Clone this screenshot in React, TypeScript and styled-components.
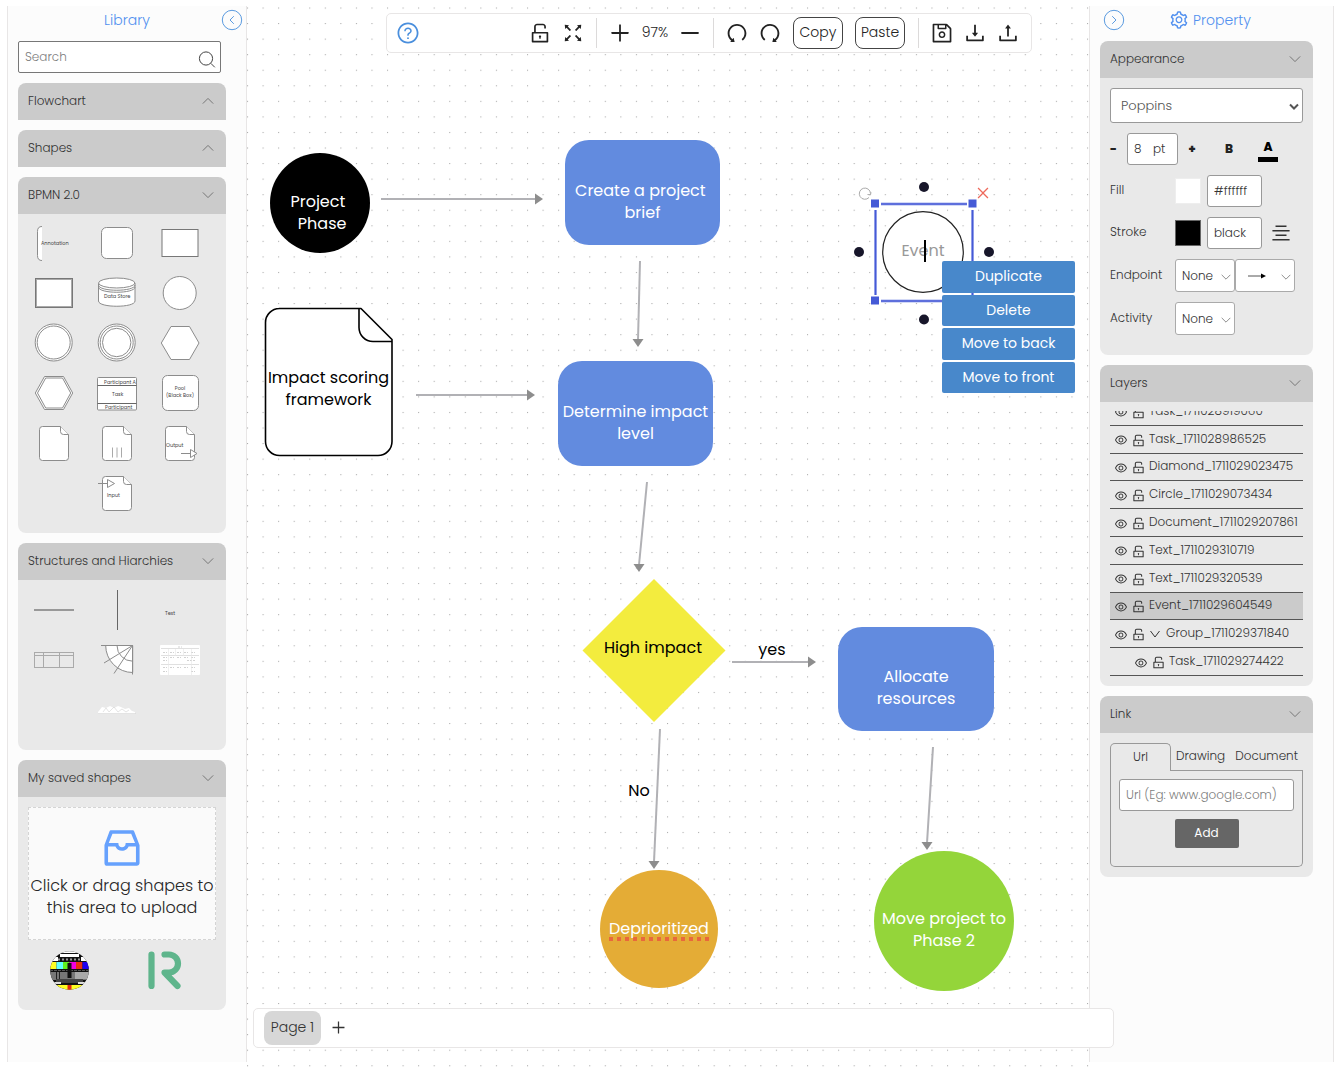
import React, { useState } from 'react';
import styled, { createGlobalStyle } from 'styled-components';
import {
  AiOutlineAlignCenter,
  AiOutlineClose,
  AiOutlineDownload,
  AiOutlineEye,
  AiOutlineFullscreen,
  AiOutlineInbox,
  AiOutlineMinus,
  AiOutlinePlus,
  AiOutlineQuestionCircle,
  AiOutlineRedo,
  AiOutlineSave,
  AiOutlineSetting,
  AiOutlineUndo,
  AiOutlineUnlock,
  AiOutlineUpload,
} from 'react-icons/ai';

const c = {
  ink: '#333333',
  link: '#5190ef',
  ring: '#5b9be0',
  panel: '#fcfcfc',
  line: '#e8e6e6',
  head: '#cbcbcb',
  body: '#e9e9e9',
  field: '#999999',
  menu: '#4888cb',
  task: '#628bdf',
};

const GlobalStyle = createGlobalStyle`
  *, *::before, *::after { box-sizing: border-box; }
  body {
    margin: 0;
    background: #fff;
    color: ${c.ink};
    font: 300 12px/20px Poppins, Inter, "Noto Sans", sans-serif;
  }
  button, input, select { font: inherit; color: inherit; }
  button { padding: 0; border: 0; background: none; cursor: pointer; }
  svg { display: block; flex: none; }
`;

const Shell = styled.div`
  display: grid;
  grid-template-columns: 240px minmax(0, 1fr) 245px;
  min-height: 100vh;
  padding: 0 1px 0 7px;
  overflow: hidden;
`;

/* ---------- side panels ---------- */

const Panel = styled.aside`
  margin: 6px 0 5px;
  padding: 0 20px 0 10px;
  border: solid ${c.line};
  border-width: 0 1px;
  background: ${c.panel};
`;

const PanelHead = styled.header<{ $side: 'left' | 'right' }>`
  display: grid;
  grid-template-columns: 22px 1fr 22px;
  align-items: center;
  height: 35px;
  padding-bottom: 7px;
  margin: ${p => (p.$side === 'left' ? '0 -17px 0 -7px' : '0 -4px 0 3px')};
`;

const PanelTitle = styled.h2`
  display: flex;
  grid-column: 2;
  align-items: center;
  justify-content: center;
  gap: 4px;
  margin: 0;
  font-size: 14px;
  font-weight: 300;
  color: ${c.link};
`;

const CollapseButton = styled.button<{ $col: number }>`
  grid-column: ${p => p.$col};
  grid-row: 1;
  color: ${c.ring};
`;

const SearchBox = styled.label`
  display: flex;
  align-items: center;
  height: 32px;
  margin: 0 5px 10px 0;
  padding: 0 4px 0 6px;
  border: 1px solid #777;
  border-radius: 2px;
  background: #fff;
  svg { margin-top: 3px; }
`;

const SearchInput = styled.input`
  flex: 1;
  min-width: 0;
  padding: 0;
  border: 0;
  outline: 0;
  background: none;
  &::placeholder { color: #808080; opacity: 1; }
`;

const Section = styled.section`
  margin-bottom: 10px;
`;

const SectionHead = styled.button`
  display: flex;
  align-items: center;
  justify-content: space-between;
  width: 100%;
  height: 37px;
  padding: 0 12px 2px 10px;
  border-radius: 8px 8px 0 0;
  background: ${c.head};
`;

const SectionBody = styled.div<{ $pad: string }>`
  padding: ${p => p.$pad};
  border-radius: 0 0 8px 8px;
  background: ${c.body};
`;

const ShapeGrid = styled.div`
  display: grid;
  grid-template-columns: repeat(3, 63px);
  grid-auto-rows: 50px;
`;

const ShapeButton = styled.button<{ $alone?: boolean }>`
  grid-column: ${p => (p.$alone ? 2 : 'auto')};
`;

const ShapeArt = styled.svg`
  fill: #fff;
  stroke: #8c8c8c;
  stroke-width: 1;
  text {
    fill: #444;
    stroke: none;
    font-size: 5px;
    font-weight: 400;
  }
`;

const DropZone = styled.button`
  display: flex;
  flex-direction: column;
  align-items: center;
  width: 100%;
  height: 133px;
  padding-top: 16px;
  border: 1px dashed #d4d4d4;
  background: #fafafa;
  font-size: 16px;
  line-height: 22px;
  color: #262626;
  white-space: nowrap;
  svg { margin-bottom: 3px; color: #66a1fd; }
`;

const SavedRow = styled.div`
  display: grid;
  grid-template-columns: repeat(2, 95px);
  justify-items: center;
  margin: 11px 0 0 -6px;
`;

/* ---------- property form ---------- */

const Form = styled.div`
  display: grid;
  gap: 10px;
`;

const Row = styled.div<{ $tall?: boolean }>`
  display: flex;
  align-items: center;
  height: ${p => (p.$tall ? 33 : 32)}px;
`;

const Label = styled.label`
  width: 65px;
  padding-bottom: 2px;
`;

const SelectWrap = styled.div<{ $width: string }>`
  display: grid;
  grid-template-columns: 1fr auto;
  align-items: center;
  width: ${p => p.$width};
  svg { pointer-events: none; grid-row: 1; grid-column: 2; margin: 2px 4px 0 0; }
`;

const Select = styled.select<{ $height: number; $pad: number }>`
  grid-area: 1 / 1 / 2 / 3;
  width: 100%;
  height: ${p => p.$height}px;
  padding: 0 0 0 ${p => p.$pad}px;
  border: 1px solid #aaa;
  border-radius: 3px;
  background: #fff;
  appearance: none;
`;

const FontSelect = styled(Select)`
  border-color: ${c.field};
  font-size: 13px;
  color: #555;
`;

const ArrowValue = styled.svg`
  && { grid-column: 1; justify-self: end; margin: 0 14px 0 0; }
`;

const Field = styled.input<{ $width: string }>`
  width: ${p => p.$width};
  height: 32px;
  padding: 0 6px;
  border: 1px solid ${c.field};
  border-radius: 3px;
  background: #fff;
  &::placeholder { color: #808080; opacity: 1; }
`;

const SizeBox = styled.label`
  display: flex;
  align-items: center;
  width: 51px;
  height: 32px;
  margin: 0 10px;
  padding: 0 0 1px 6px;
  border: 1px solid ${c.field};
  border-radius: 3px;
  background: #fff;
`;

const SizeInput = styled.input`
  width: 19px;
  padding: 0;
  border: 0;
  outline: 0;
  background: none;
`;

const StrongButton = styled.button<{ $width: number }>`
  width: ${p => p.$width}px;
  font-weight: 800;
  color: #222;
`;

const ColorButton = styled(StrongButton)`
  height: 26px;
  margin-left: 22px;
  border-bottom: 5px solid #000;
  color: #000;
`;

const BoldButton = styled(StrongButton)`
  margin-left: 26px;
`;

const Swatch = styled.button<{ $fill: string; $edge: string }>`
  width: 26px;
  height: 26px;
  margin-right: 6px;
  border: 1px solid ${p => p.$edge};
  background: ${p => p.$fill};
`;

const AlignButton = styled.button`
  margin-left: 8px;
`;

/* ---------- layers ---------- */

const LayerViewport = styled.div`
  display: flex;
  align-items: flex-end;
  height: 265px;
  overflow: hidden;
`;

const LayerList = styled.ul`
  display: grid;
  grid-auto-rows: 1fr;
  width: 100%;
  height: 278px;
  margin: 0;
  padding: 0;
  list-style: none;
`;

const Layer = styled.li<{ $active?: boolean; $nested?: boolean }>`
  display: flex;
  align-items: center;
  gap: 3px;
  padding-left: ${p => (p.$nested ? 24 : 4)}px;
  border-bottom: 1px solid #555;
  background: ${p => (p.$active ? c.head : 'transparent')};
  white-space: nowrap;
`;

const LayerTool = styled.button`
  padding-top: 2px;
`;

const LayerName = styled.span`
  padding-bottom: 1px;
`;

/* ---------- link tabs ---------- */

const Tabs = styled.div`
  display: flex;
`;

const Tab = styled.button<{ $active?: boolean }>`
  flex: ${p => (p.$active ? '0 0 61px' : '1 1 auto')};
  height: 28px;
  padding-bottom: 2px;
  border: 1px solid ${c.field};
  border-width: ${p => (p.$active ? '1px 1px 0' : '0 0 1px')};
  border-radius: ${p => (p.$active ? '5px 5px 0 0' : '0')};
`;

const TabPanel = styled.div`
  display: flex;
  flex-direction: column;
  align-items: center;
  gap: 8px;
  padding: 8px 8px 18px;
  border: 1px solid ${c.field};
  border-top: 0;
  border-radius: 0 0 5px 5px;
`;

const AddButton = styled.button`
  width: 64px;
  height: 29px;
  padding-bottom: 1px;
  border-radius: 2px;
  background: #666;
  color: #fff;
  font-weight: 400;
`;

/* ---------- canvas ---------- */

const Stage = styled.main`
  position: relative;
  z-index: 1;
`;

const Backdrop = styled.svg`
  position: absolute;
  inset: 0;
  width: 100%;
  height: 100%;
`;

const Bar = styled.div`
  display: flex;
  align-items: center;
  border: 1px solid ${c.line};
  border-radius: 5px;
  background: #fff;
`;

const Toolbar = styled(Bar)`
  position: absolute;
  top: 13px;
  left: 139px;
  gap: 9px;
  width: 646px;
  height: 40px;
  padding: 0 11px 1px 9px;
  color: #222;
`;

const Spacer = styled.div`
  flex: 1;
`;

const Divider = styled.div`
  width: 1px;
  height: 30px;
  margin: 0 2px;
  background: #dcdada;
`;

const Zoom = styled.output`
  width: 28px;
  padding-bottom: 1px;
  font-size: 14px;
  text-align: center;
`;

const ToolButton = styled.button<{ $color?: string }>`
  color: ${p => p.$color ?? 'inherit'};
`;

const ClipButtons = styled.div`
  display: flex;
  gap: 12px;
  margin: 0 2px;
`;

const ClipButton = styled.button`
  width: 50px;
  height: 32px;
  padding-bottom: 2px;
  border: 1px solid #444;
  border-radius: 8px;
  font-size: 14px;
`;

const PageBar = styled(Bar)`
  position: absolute;
  right: -25px;
  bottom: 19px;
  left: 6px;
  gap: 9px;
  height: 40px;
  padding: 0 10px 1px;
`;

const PageTab = styled.button`
  width: 57px;
  height: 34px;
  padding-bottom: 2px;
  border-radius: 8px;
  background: #d7d7d7;
  font-size: 14px;
`;

type Kind = 'box' | 'circle' | 'plain';

const Node = styled.div<{
  $x: number; $y: number; $w: number; $h: number;
  $kind: Kind; $fill?: string; $color?: string; $drop?: number;
}>`
  position: absolute;
  left: ${p => p.$x}px;
  top: ${p => p.$y}px;
  display: flex;
  align-items: center;
  justify-content: center;
  width: ${p => p.$w}px;
  height: ${p => p.$h}px;
  padding-top: ${p => p.$drop ?? 0}px;
  border-radius: ${p => ({ box: '24px', circle: '50%', plain: '0' })[p.$kind]};
  background: ${p => p.$fill ?? 'transparent'};
  color: ${p => p.$color ?? '#fff'};
  font-size: 16px;
  font-weight: 400;
  line-height: 22px;
  text-align: center;
  white-space: pre;
`;

const Misspelt = styled.span`
  padding-bottom: 1px;
  background: repeating-linear-gradient(90deg, #e8683c 0 4px, transparent 4px 8px) 0 100% / 100% 4px no-repeat;
`;

const Menu = styled.div`
  position: absolute;
  top: 261px;
  left: 695px;
  display: flex;
  flex-direction: column;
  gap: 2px;
  width: 133px;
  height: 132px;
`;

const MenuItem = styled.button`
  flex: 1;
  padding-bottom: 1px;
  border-radius: 2px;
  background: ${c.menu};
  color: #fff;
  font-size: 14px;
  font-weight: 400;
`;

const DeleteHandle = styled.button`
  position: absolute;
  top: 185px;
  left: 728px;
  color: #ee6a5c;
`;

/* ---------- small drawings ---------- */

const Chevron = ({ up, w = 12 }: { up?: boolean; w?: number }) => (
  <svg width={w} height="8" viewBox="0 0 12 8" fill="none" stroke="#777">
    <path d={up ? 'M.8 6.6 6 1.4l5.2 5.2' : 'M.8 1.4 6 6.6l5.2-5.2'} />
  </svg>
);

const CollapseIcon = ({ right }: { right?: boolean }) => (
  <svg width="22" height="22" viewBox="0 0 22 22" fill="none" stroke="currentColor">
    <circle cx="11" cy="11" r="9.7" />
    <path d={right ? 'M9.2 7.2 13 11l-3.8 3.8' : 'M12.8 7.2 9 11l3.8 3.8'} />
  </svg>
);

const SearchIcon = () => (
  <svg width="18" height="18" viewBox="0 0 18 18" fill="none" stroke="#444">
    <circle cx="8" cy="8.500" r="6.600" />
    <path d="m12.800 13.300 4 4" />
  </svg>
);

const DOC = 'M20.5 8.5h18l8 8v23a3 3 0 0 1-3 3h-23a3 3 0 0 1-3-3v-28a3 3 0 0 1 3-3z';
const FOLD = 'M38.5 8.5v5a3 3 0 0 0 3 3h5';

const bpmn: [string, React.ReactNode][] = [
  ['Annotation', <><path d="M20 8.500c-3 0-4.500 1.500-4.500 5v24c0 3.500 1.500 5 4.500 5" /><text x="19" y="27">Annotation</text></>],
  ['Task', <rect x="16.500" y="9.500" width="31" height="31" rx="5" />],
  ['Rectangle', <rect x="14" y="11.500" width="36" height="27" stroke="#777" />],
  ['Double rectangle', <><rect x="13.500" y="10.500" width="37" height="29" stroke="#777" /><rect x="14.500" y="11.500" width="35" height="27" stroke="#aaa" /></>],
  ['Data store', <>
    <path d="M13.500 15v18c0 7 36.500 7 36.500 0V15" />
    <path d="M13.500 19c0 7 36.500 7 36.500 0M13.500 17c0 7 36.500 7 36.500 0" fill="none" />
    <ellipse cx="31.700" cy="15" rx="18.200" ry="5" /><text x="19" y="30">Data Store</text></>],
  ['Circle', <circle cx="31.700" cy="25" r="16.500" />],
  ['Double circle', <><circle cx="31.700" cy="24.500" r="18.500" /><circle cx="31.700" cy="24.500" r="16.500" /></>],
  ['Triple circle', <><circle cx="31.700" cy="24.500" r="18.500" /><circle cx="31.700" cy="24.500" r="16.500" /><circle cx="31.700" cy="24.500" r="14.200" /></>],
  ['Hexagon', <path d="M13.300 25 23 8.500h18.500L51 25l-9.500 16.500H23z" />],
  ['Double hexagon', <><path d="M13.300 25 22.500 8.500h19L50.700 25l-9.200 16.500h-19z" /><path d="m15.500 25 8.200-15h16.800l8.200 15-8.200 15H23.700z" /></>],
  ['Participants', <>
    <rect x="12.500" y="9.500" width="39" height="32.500" rx="1" /><path d="M12.500 17.500h39M12.500 35.500h39" stroke="#666" />
    <text x="19" y="15.500">Participant A</text><text x="27" y="27.500">Task</text><text x="20" y="41">Participant</text></>],
  ['Pool', <><rect x="14.500" y="7.500" width="36" height="35" rx="5" />
    <text x="32" y="22" textAnchor="middle">Pool</text><text x="32" y="29" textAnchor="middle">(Black Box)</text></>],
  ['Document', <><path d={DOC} /><path d={FOLD} /></>],
  ['Collection', <><path d={DOC} /><path d={FOLD} /><path d="M27.500 29.500v10M32 29.500v10M36.500 29.500v10" stroke="#aaa" /></>],
  ['Output', <><path d={DOC} /><path d={FOLD} /><text x="18" y="29">Output</text><path d="M33 35.500h9" /><path d="m42.500 31.500 6.500 4-6.500 4z" /></>],
  ['Input', <><path d={DOC} /><path d={FOLD} /><text x="22" y="29">Input</text><path d="M13 15.500h9" /><path d="m22.500 11.500 7 4-7 4z" /></>],
];

const structures: [string, React.ReactNode][] = [
  ['Horizontal line', <path d="M12 25h40" stroke="#999" strokeWidth="2" />],
  ['Vertical line', <path d="M32.500 5v40" stroke="#666" />],
  ['Text', <text x="17" y="30">Text</text>],
  ['Table', <g fill="none" stroke="#aaa"><rect x="12.500" y="17.500" width="39" height="15" /><path d="M12.500 20.500h39M21.500 17.500v15M37.500 17.500v15" /></g>],
  ['Fan', <>
    <path d="M20.700 10.500a27 27 0 0 0 27 27v-27z" /><path d="M32 10.500a15.700 15.700 0 0 0 15.700 15.700" fill="none" />
    <path d="M47.500 10.500 19 28M47.500 10.500 29 38.500M16 10.500h31.500v29" fill="none" stroke="#8c8c8c" /></>],
  ['Canvas board', <g stroke="none">
    <rect x="12" y="10" width="40" height="30" rx="1" />
    <path d="M13 13.500h38M13 20.500h38M13 29.500h38" stroke="#e0e0e0" />
    <path d="M15 17.500h4m3 0h4m3 0h4m3 0h4m3 0h4M15 22.500h4m3 0h4m3 0h4m3 0h4m3 0h4M15 25.500h4m20 0h9M15 32.500h4m3 0h4m3 0h4m3 0h4m3 0h4M15 36.500h4m24 0h4M30 12h4" stroke="#d2d2d2" strokeDasharray="2 1" />
    <path d="M20.500 14v26M27.500 14v7M35.500 14v7M43.500 14v26" stroke="#e6e6e6" strokeWidth=".6" />
  </g>],
  ['Landscape', <><path d="M13 29v-2l4-5 4 1 4-2 4 2 4-2 3 1 4 2 4-1 3 3 3 1v2z" stroke="none" />
    <path d="m18 27 3-4 3 4 5-5 4 5 4-3 4 3 3-2M13 28.500h38" fill="none" stroke="#d8d8d8" strokeWidth=".7" /></>],
];

const Shapes = ({ items }: { items: [string, React.ReactNode][] }) => (
  <ShapeGrid>
    {items.map(([name, art], i) => (
      <ShapeButton key={name} aria-label={name} $alone={i === items.length - 1}>
        <ShapeArt width="63" height="50" viewBox="0 0 63 50">{art}</ShapeArt>
      </ShapeButton>
    ))}
  </ShapeGrid>
);

const bars = ['#ffff20', '#60ffff', '#60f020', '#f000e0', '#e83010', '#2000f0'];

const TestCard = () => (
  <svg width="39" height="39" viewBox="0 0 39 39">
    <clipPath id="disc"><circle cx="19.500" cy="19.500" r="19.300" /></clipPath>
    <g clipPath="url(#disc)">
      <path fill="#111" d="M0 0h39v39H0z" />
      <path fill="#fff" d="M0 0h39v2H0zM10 3h19v3H10zM3 6h5v4H3zM31 6h5v4h-5z" />
      <path d="M8 8.500h24" stroke="#999" strokeWidth="2" strokeDasharray="2 2" />
      {bars.map((fill, i) => <path key={fill} fill={fill} d={`M${i * 6.5} 11h6.5v7H${i * 6.5}z`} />)}
      <path d="M0 19.500h39" stroke="#555" strokeDasharray="3 1" />
      <path fill="#777" d="M0 21h39v8H0z" /><path fill="#aaa" d="M25 21h14v7H25z" />
      <path d="M6.500 21v8M9.500 21v8" stroke="#222" />
      <path fill="#444" d="M6 28h27v4H6z" />
      <path fill="#ddd" d="M3 31h8v2H3zM28 31h8v2h-8z" />
      <path fill="#111" d="M17.500 12h4v15h-4z" />
      <path fill="#ff2" d="M0 34h39v5H0z" /><path fill="#e22a10" d="M17.500 34h4v5h-4z" />
    </g>
  </svg>
);

const BrandMark = () => (
  <svg width="34" height="39" viewBox="0 0 34 39" fill="none" stroke="#5fb58c" strokeWidth="6.200" strokeLinecap="round" strokeLinejoin="round">
    <path d="M3.500 3.500v31.500M16.500 3.500H21a8.800 8.800 0 0 1 0 18h-4.500L29.500 35" />
  </svg>
);

/* Lines of the diagram: start, tip, and the direction of the head. */
const arrows: [number, number, number, number, 'r' | 'd'][] = [
  [134, 199, 296, 199, 'r'],
  [393, 261, 391, 347, 'd'],
  [169, 395, 288, 395, 'r'],
  [400, 482, 392, 572, 'd'],
  [485, 662, 569, 662, 'r'],
  [413, 729, 407, 869, 'd'],
  [686, 747, 680, 850, 'd'],
];

const Drawing = () => (
  <Backdrop aria-hidden="true">
    <defs>
      <pattern id="dots" width="16" height="16" patternUnits="userSpaceOnUse" patternTransform="translate(0 7.500) scale(.9722)">
        <rect width="1.100" height="1.100" fill="#a9a9a9" />
      </pattern>
    </defs>
    <rect width="100%" height="100%" fill="url(#dots)" />
    {arrows.map(([x1, y1, x2, y2, dir]) => (
      <g key={`${x1}-${y1}`}>
        <path d={dir === 'r' ? `M${x1} ${y1}H${x2 - 7}` : `M${x1} ${y1}L${x2} ${y2 - 7}`} stroke="#b1b1b5" strokeWidth="2" />
        <path d={dir === 'r' ? `M${x2} ${y2}l-8-5.500v11z` : `M${x2} ${y2}l-5.500-8h11z`} fill="#8d8d8d" />
      </g>
    ))}
    <path d="M32 308.500h82l31 31v102a14 14 0 0 1-14 14H32.500a14 14 0 0 1-14-14v-119a14 14 0 0 1 14-14z" fill="#fff" stroke="#000" strokeWidth="1.600" strokeLinejoin="round" />
    <path d="M112 308.500v19a14 14 0 0 0 14 14h19" fill="none" stroke="#000" strokeWidth="1.600" />
    <path d="M407 579l71.500 71.500L407 722l-71.500-71.500z" fill="#f3ec3e" />
    <circle cx="676" cy="252" r="40.300" fill="#fff" stroke="#222" strokeWidth="1.200" />
    <path d="M634 204h86M634 301h86M628.500 210v85M725.500 210v85" stroke="#a8b3ee" strokeWidth="3" />
    <path d="M634 204h86M634 301h86M628.500 210v85M725.500 210v85" stroke="#455ad6" strokeWidth="1.500" />
    {[[624, 199.5], [721.5, 199.5], [624, 296.5]].map(([x, y]) => (
      <rect key={`${x}-${y}`} x={x} y={y} width="8" height="8" fill="#455ad6" />
    ))}
    {[[677, 187], [612, 252], [742, 252], [677, 319.5]].map(([x, y]) => (
      <circle key={`${x}-${y}`} cx={x} cy={y} r="5" fill="#17162a" />
    ))}
    <path d="M622 197.500a5.600 5.600 0 1 1 1.500-4M620.500 194.500l3 .3 .5-2.500" fill="none" stroke="#aaa" />
  </Backdrop>
);

const FontArrow = () => (
  <svg width="10" height="8" viewBox="0 0 10 8" fill="none" stroke="#555" strokeWidth="2">
    <path d="m1 1.500 4 4 4-4" />
  </svg>
);

const layerNames = [
  'Task_1711028919060', 'Task_1711028986525', 'Diamond_1711029023475', 'Circle_1711029073434',
  'Document_1711029207861', 'Text_1711029310719', 'Text_1711029320539', 'Event_1711029604549',
  'Group_1711029371840', 'Task_1711029274422',
];

type FoldProps = { title: string; pad?: string; open?: boolean; children?: React.ReactNode };

const Fold = ({ title, pad = '10px', open = true, children }: FoldProps) => {
  const [shown, setShown] = useState(open);
  return (
    <Section>
      <SectionHead aria-expanded={shown} onClick={() => setShown(!shown)}>
        {title}
        <Chevron up={!shown} />
      </SectionHead>
      {shown && <SectionBody $pad={pad}>{children}</SectionBody>}
    </Section>
  );
};

const Library = () => (
  <Panel>
    <PanelHead $side="left">
      <PanelTitle>Library</PanelTitle>
      <CollapseButton $col={3} aria-label="Collapse library"><CollapseIcon /></CollapseButton>
    </PanelHead>
    <SearchBox>
      <SearchInput type="text" placeholder="Search" aria-label="Search" />
      <SearchIcon />
    </SearchBox>
    <Fold title="Flowchart" open={false} />
    <Fold title="Shapes" open={false} />
    <Fold title="BPMN 2.0" pad="4px 0 15px 4px"><Shapes items={bpmn} /></Fold>
    <Fold title="Structures and Hiarchies" pad="5px 0 15px 4px"><Shapes items={structures} /></Fold>
    <Fold title="My saved shapes" pad="10px 10px 20px">
      <DropZone>
        <AiOutlineInbox size={48} />
        <span>Click or drag shapes to</span>
        <span>this area to upload</span>
      </DropZone>
      <SavedRow>
        <button aria-label="Test card"><TestCard /></button>
        <button aria-label="Brand mark"><BrandMark /></button>
      </SavedRow>
    </Fold>
  </Panel>
);

const Properties = () => (
  <Panel>
    <PanelHead $side="right">
      <CollapseButton $col={1} aria-label="Collapse properties"><CollapseIcon right /></CollapseButton>
      <PanelTitle><AiOutlineSetting size={20} />Property</PanelTitle>
    </PanelHead>
    <Fold title="Appearance" pad="10px 10px 20px">
      <Form>
        <SelectWrap $width="100%">
          <FontSelect $height={35} $pad={10} aria-label="Font"><option>Poppins</option></FontSelect>
          <FontArrow />
        </SelectWrap>
        <Row>
          <StrongButton $width={7} aria-label="Smaller">-</StrongButton>
          <SizeBox><SizeInput defaultValue="8" aria-label="Font size" />pt</SizeBox>
          <StrongButton $width={8} aria-label="Larger">+</StrongButton>
          <BoldButton $width={14}>B</BoldButton>
          <ColorButton $width={20}>A</ColorButton>
        </Row>
        <Row>
          <Label htmlFor="fill">Fill</Label>
          <Swatch $fill="#fff" $edge="#eee" aria-label="Fill colour" />
          <Field id="fill" $width="55px" defaultValue="#ffffff" />
        </Row>
        <Row>
          <Label htmlFor="stroke">Stroke</Label>
          <Swatch $fill="#000" $edge="#666" aria-label="Stroke colour" />
          <Field id="stroke" $width="55px" defaultValue="black" />
          <AlignButton aria-label="Stroke style"><AiOutlineAlignCenter size={22} /></AlignButton>
        </Row>
        <Row $tall>
          <Label htmlFor="endpoint">Endpoint</Label>
          <SelectWrap $width="60px">
            <Select id="endpoint" $height={33} $pad={6}><option>None</option></Select>
            <Chevron w={10} />
          </SelectWrap>
          <SelectWrap $width="60px">
            <Select $height={33} $pad={6} aria-label="End arrow"><option aria-label="Arrow" /></Select>
            <ArrowValue width="20" height="6" viewBox="0 0 20 6"><path d="M1 3h14" stroke="#555" /><path d="m14 .5 5 2.500-5 2.500z" /></ArrowValue>
            <Chevron w={10} />
          </SelectWrap>
        </Row>
        <Row $tall>
          <Label htmlFor="activity">Activity</Label>
          <SelectWrap $width="60px">
            <Select id="activity" $height={33} $pad={6}><option>None</option></Select>
            <Chevron w={10} />
          </SelectWrap>
        </Row>
      </Form>
    </Fold>
    <Fold title="Layers" pad="9px 10px 10px">
      <LayerViewport>
        <LayerList>
          {layerNames.map(name => (
            <Layer key={name} $active={name.startsWith('Event')} $nested={name === 'Task_1711029274422'}>
              <LayerTool aria-label="Show or hide"><AiOutlineEye size={14} /></LayerTool>
              <LayerTool aria-label="Lock"><AiOutlineUnlock size={15} /></LayerTool>
              {name.startsWith('Group') && (
                <svg width="14" height="8" viewBox="0 0 14 8" fill="none" stroke="#333"><path d="m1.500 1 4.500 6 4.500-6" /></svg>
              )}
              <LayerName>{name}</LayerName>
            </Layer>
          ))}
        </LayerList>
      </LayerViewport>
    </Fold>
    <Fold title="Link">
      <Tabs role="tablist">
        <Tab role="tab" $active>Url</Tab>
        <Tab role="tab">Drawing</Tab>
        <Tab role="tab">Document</Tab>
      </Tabs>
      <TabPanel role="tabpanel">
        <Field $width="100%" placeholder="Url (Eg: www.google.com)" aria-label="Url" />
        <AddButton>Add</AddButton>
      </TabPanel>
    </Fold>
  </Panel>
);

const Tools = () => (
  <Toolbar role="toolbar">
    <ToolButton $color="#4a8fdd" aria-label="Help"><AiOutlineQuestionCircle size={24} /></ToolButton>
    <Spacer />
    <ToolButton aria-label="Lock"><AiOutlineUnlock size={24} /></ToolButton>
    <ToolButton aria-label="Full screen"><AiOutlineFullscreen size={24} /></ToolButton>
    <Divider />
    <ToolButton aria-label="Zoom in"><AiOutlinePlus size={24} /></ToolButton>
    <Zoom>97%</Zoom>
    <ToolButton aria-label="Zoom out"><AiOutlineMinus size={24} /></ToolButton>
    <Divider />
    <ToolButton aria-label="Undo"><AiOutlineUndo size={24} /></ToolButton>
    <ToolButton aria-label="Redo"><AiOutlineRedo size={24} /></ToolButton>
    <ClipButtons>
      <ClipButton>Copy</ClipButton>
      <ClipButton>Paste</ClipButton>
    </ClipButtons>
    <Divider />
    <ToolButton aria-label="Save"><AiOutlineSave size={24} /></ToolButton>
    <ToolButton aria-label="Download"><AiOutlineDownload size={24} /></ToolButton>
    <ToolButton aria-label="Upload"><AiOutlineUpload size={24} /></ToolButton>
  </Toolbar>
);

const Caret = styled.span`
  position: absolute;
  left: 42px;
  width: 2px;
  height: 22px;
  background: #000;
`;

export default function App() {
  return (
    <Shell>
      <GlobalStyle />
      <Library />
      <Stage>
        <Drawing />
        <Node $kind="circle" $x={23} $y={153} $w={100} $h={100} $fill="#000" $drop={20}>{'Project \n Phase'}</Node>
        <Node $kind="box" $x={318} $y={140} $w={155} $h={105} $fill={c.task} $drop={18}>{'Create a project \nbrief'}</Node>
        <Node $kind="plain" $x={18} $y={308} $w={127} $h={148} $color="#000" $drop={14}>{'Impact scoring\nframework'}</Node>
        <Node $kind="box" $x={311} $y={361} $w={155} $h={105} $fill={c.task} $drop={18}>{'Determine impact\nlevel'}</Node>
        <Node $kind="plain" $x={346} $y={637} $w={120} $h={22} $color="#000">High impact</Node>
        <Node $kind="plain" $x={505} $y={639} $w={40} $h={22} $color="#000">yes</Node>
        <Node $kind="plain" $x={372} $y={780} $w={40} $h={22} $color="#000">No</Node>
        <Node $kind="box" $x={591} $y={627} $w={156} $h={104} $fill={c.task} $drop={18}>{'Allocate\nresources'}</Node>
        <Node $kind="circle" $x={353} $y={870} $w={118} $h={118} $fill="#e4ac36"><Misspelt>Deprioritized</Misspelt></Node>
        <Node $kind="circle" $x={627} $y={851} $w={140} $h={140} $fill="#94d53a" $drop={18}>{'Move project to\nPhase 2'}</Node>
        <Node $kind="plain" $x={635} $y={211} $w={82} $h={80} $color="#999">Event<Caret /></Node>
        <DeleteHandle aria-label="Delete shape"><AiOutlineClose size={16} /></DeleteHandle>
        <Menu role="menu">
          <MenuItem role="menuitem">Duplicate</MenuItem>
          <MenuItem role="menuitem">Delete</MenuItem>
          <MenuItem role="menuitem">Move to back</MenuItem>
          <MenuItem role="menuitem">Move to front</MenuItem>
        </Menu>
        <Tools />
        <PageBar>
          <PageTab>Page 1</PageTab>
          <button aria-label="Add page"><AiOutlinePlus size={17} /></button>
        </PageBar>
      </Stage>
      <Properties />
    </Shell>
  );
}
